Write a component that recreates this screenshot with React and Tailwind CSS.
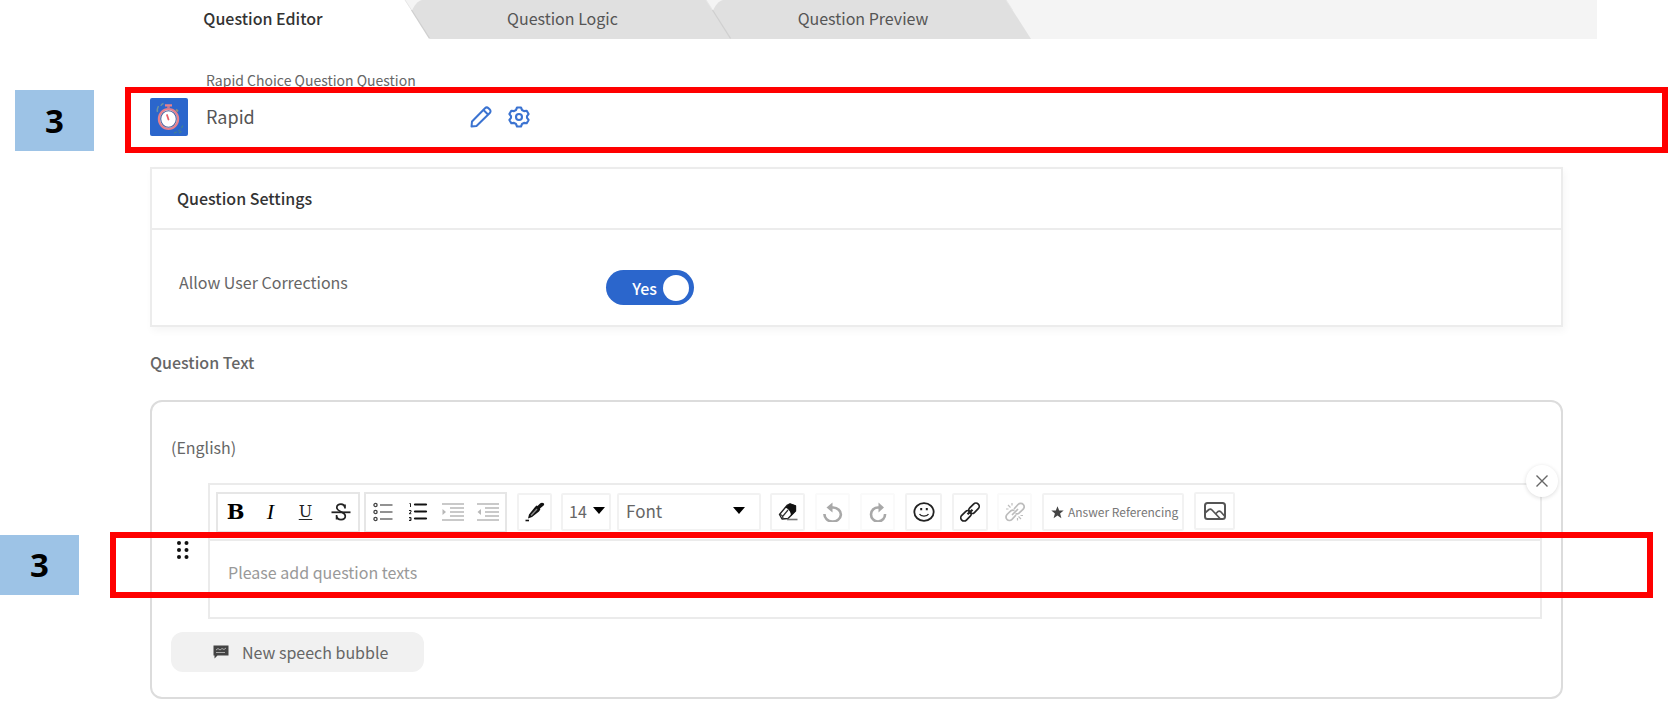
import React from "react";

function Slope({ left, right }) {
  return (
    <svg className="h-full w-[26px] shrink-0 bg-[#f4f4f4]" viewBox="0 0 26 39" preserveAspectRatio="none" aria-hidden="true">
      {right && <path d="M26 0H18C14 1 10 5 8 11L25 39H26Z" fill={right} />}
      <path d="M0 0H1L26 39H0Z" fill={left} />
      <path d="M1 0L7.500 10" stroke="#e6e6e6" strokeWidth="1" fill="none" />
      {right && <path d="M7.500 10L25.500 38.500" stroke="#cfcfcf" strokeWidth="1.300" fill="none" />}
    </svg>
  );
}

function Stopwatch() {
  return (
    <svg viewBox="0 0 38 38" className="h-[38px] w-[38px] shrink-0 rounded-[2px] bg-[#2b66cc]" aria-hidden="true">
      <ellipse cx="18.500" cy="21" rx="9.600" ry="10" fill="#fff" stroke="#e8808c" strokeWidth="2.200" />
      <ellipse cx="18.500" cy="21" rx="7.800" ry="8.200" fill="none" stroke="#4a5f9c" strokeWidth="1.100" />
      <path d="M15 7.300h7" stroke="#e8808c" strokeWidth="2.200" />
      <path d="M18.500 8v3" stroke="#c77b95" strokeWidth="2.600" />
      <path d="M17 17l1.500 4.500" stroke="#e8606c" strokeWidth="1.800" strokeLinecap="round" />
      <path d="M26 11.500l2 2" stroke="#8a8f83" strokeWidth="2" />
      <path d="M7.500 14c-1-2 0-4 1-6M11 8c0-1 1-2 2.500-2.500" stroke="#6d93a0" strokeWidth="1.400" fill="none" />
      <path d="M24 35c4-1 7-3 9-8M29 35l3-2" stroke="#3f7f98" strokeWidth="1.400" strokeDasharray="3 1.500" fill="none" />
    </svg>
  );
}

function Pencil() {
  return (
    <svg viewBox="0 0 22 22" className="h-[22px] w-[22px]" fill="none" stroke="#3b73d1" strokeWidth="2" strokeLinejoin="round" aria-hidden="true">
      <path d="M1.500 20.500L2 15.500L15 2.200C16 1.200 17.500 1.200 18.500 2.200L19.800 3.500C20.800 4.500 20.800 6 19.800 7L6.500 20Z" />
      <path d="M13.500 4L18 8.500" />
    </svg>
  );
}

function Gear() {
  return (
    <svg viewBox="0 0 22 22" className="h-[22px] w-[22px]" fill="none" stroke="#3b73d1" strokeWidth="2.100" strokeLinejoin="round" aria-hidden="true">
      <path d="M9 1.500H13L14 4L16 5.100L18.700 4.700L20.600 8.100L19 10.200V11.800L20.600 13.900L18.700 17.300L16 16.900L14 18L13 20.500H9L8 18L6 16.900L3.300 17.300L1.400 13.900L3 11.800V10.200L1.400 8.100L3.300 4.700L6 5.100L8 4Z" />
      <circle cx="11" cy="11" r="3" />
    </svg>
  );
}

function ToolButton({ label, className = "", children }) {
  return (
    <button type="button" aria-label={label} className={`flex h-[38px] shrink-0 items-center justify-center rounded-[2px] ${className}`}>
      {children}
    </button>
  );
}

function ListIcon({ numbered }) {
  return (
    <svg viewBox="0 0 20 20" className="h-5 w-5" aria-hidden="true">
      {[3, 10, 17].map((y, i) =>
        numbered ? (
          <g key={y}>
            <path d={i === 0 ? "M1.500 1.500h1v3.500" : i === 1 ? "M1 8.500h2v1.500l-2 1.700h2.300" : "M1 15.500h2v3h-2M1.500 17h1.500"} stroke="#222" fill="none" />
            <path d={`M7 ${y - 0.5}h11`} stroke="#111" strokeWidth="2.200" strokeLinecap="round" />
          </g>
        ) : (
          <g key={y}>
            <circle cx="2.500" cy={y} r="1.600" stroke="#444" strokeWidth="1.300" fill="none" />
            <path d={`M7 ${y}h12.500`} stroke="#777" strokeWidth="1.600" />
          </g>
        )
      )}
    </svg>
  );
}

function IndentIcon({ out }) {
  return (
    <svg viewBox="0 0 22 20" className="h-5 w-[22px]" stroke="#b8b8b8" strokeWidth="1.700" fill="none" aria-hidden="true">
      <path d="M0 2h22M8 6h14M8 10h14M8 14h14M0 18h22" />
      <path d={out ? "M4 7L0.500 10L4 13Z" : "M0.500 7L4 10L0.500 13Z"} fill="#b8b8b8" stroke="none" />
    </svg>
  );
}

function Toolbar() {
  const box = "border-2 border-[#f2f2f2]";
  const faint = "border-2 border-[#fafafa]";
  return (
    <div className="flex h-[54px] items-center overflow-hidden px-[6px]">
      <div className="flex h-[41px] w-[144px] shrink-0 items-center justify-around border-2 border-[#e6e6e6]">
        <ToolButton label="Bold" className="w-8">
          <span className="font-['DejaVu_Serif',serif] text-[21px] font-bold leading-6 text-black">B</span>
        </ToolButton>
        <ToolButton label="Italic" className="w-8">
          <span className="font-['Liberation_Serif',serif] text-[22px] italic leading-6 text-black">I</span>
        </ToolButton>
        <ToolButton label="Underline" className="w-8">
          <span className="font-['DejaVu_Serif',serif] text-[16px] leading-6 text-[#222] underline underline-offset-2">U</span>
        </ToolButton>
        <ToolButton label="Strikethrough" className="w-8">
          <svg viewBox="0 0 20 20" className="h-5 w-5" fill="none" stroke="#222" aria-hidden="true">
            <path d="M14 6.500V2.500M14 5.500C13.500 3 12 2.200 10 2.200C7.500 2.200 5.800 3.300 5.800 5.500C5.800 8 8 8.800 10 9.800C12.500 11 14.300 11.500 14.300 14C14.300 16.300 12.500 17.600 10 17.600C7.500 17.600 6 16.500 5.600 14M5.600 13V17.500" strokeWidth="1.700" />
            <path d="M0.500 10.300H19.500" strokeWidth="1.800" />
          </svg>
        </ToolButton>
      </div>
      <div className="ml-[4px] flex h-[41px] w-[143px] shrink-0 items-center justify-around border-2 border-[#e6e6e6]">
        <ToolButton label="Bulleted list" className="w-8"><ListIcon /></ToolButton>
        <ToolButton label="Numbered list" className="w-8"><ListIcon numbered /></ToolButton>
        <ToolButton label="Indent" className="w-8"><IndentIcon /></ToolButton>
        <ToolButton label="Outdent" className="w-8"><IndentIcon out /></ToolButton>
      </div>
      <ToolButton label="Text color" className={`ml-[10px] w-[35px] ${box}`}>
        <svg viewBox="0 0 20 20" className="h-5 w-5" aria-hidden="true">
          <path d="M18.700 1.200C17.500 0.200 15.800 0.600 14.800 1.700L12.500 4L11.500 3.500L10 5L4 12.500L3 16.500L7 15L14 9.500L15.300 7.500L15 6.500L18 4C19.200 3 19.600 2 18.700 1.200Z" fill="#111" />
          <path d="M6 13.500L12 7" stroke="#888" strokeWidth="1.400" />
          <path d="M0.500 18.500H4" stroke="#111" strokeWidth="1.600" />
        </svg>
      </ToolButton>
      <div className={`relative ml-[9px] h-[38px] w-[50px] shrink-0 rounded-[2px] ${box}`}>
        <select aria-label="Font size" defaultValue="14" className="h-full w-full appearance-none bg-transparent pb-[2px] pl-[6px] text-[16px] leading-5 text-[#666] outline-none">
          <option>14</option>
        </select>
        <svg viewBox="0 0 12 7" className="pointer-events-none absolute right-[4px] top-[12px] h-[7px] w-3" aria-hidden="true"><path d="M0 0H12L6 7Z" /></svg>
      </div>
      <div className={`relative ml-[6px] h-[38px] w-[144px] shrink-0 rounded-[2px] ${box}`}>
        <select aria-label="Font" defaultValue="Font" className="h-full w-full appearance-none bg-transparent pb-[2px] pl-[7px] text-[17px] leading-5 text-[#666] outline-none">
          <option>Font</option>
        </select>
        <svg viewBox="0 0 12 7" className="pointer-events-none absolute right-[14px] top-[12px] h-[7px] w-3" aria-hidden="true"><path d="M0 0H12L6 7Z" /></svg>
      </div>
      <ToolButton label="Clear formatting" className={`ml-[9px] w-[35px] ${box}`}>
        <svg viewBox="0 0 20 20" className="h-5 w-5" aria-hidden="true">
          <path d="M1.500 12.500L9 3.500L12 2L17.500 4V9L10 16.500L4 17Z" fill="#fff" stroke="#222" strokeWidth="1.400" strokeLinejoin="round" />
          <path d="M7 5.500L12 1.500L17.800 3.500V9L13 14C13 10 11 7 7 5.500Z" fill="#111" />
          <path d="M5 16.500C5 14 4.500 13 2 12.500M5 14L10 8" stroke="#333" strokeWidth="1.200" fill="none" />
          <path d="M9 17.500H19.500" stroke="#777" strokeWidth="1.600" />
        </svg>
      </ToolButton>
      <ToolButton label="Undo" className={`ml-[10px] w-[35px] ${faint}`}>
        <svg viewBox="0 0 20 20" className="h-5 w-5" aria-hidden="true">
          <path d="M1.500 12A8.200 7 0 1 0 10 5.500H7" fill="none" stroke="#a8a8a8" strokeWidth="2.600" />
          <path d="M9.500 0.500V10.500L3.500 5.500Z" fill="#a8a8a8" />
        </svg>
      </ToolButton>
      <ToolButton label="Redo" className={`ml-[10px] w-[35px] ${faint}`}>
        <svg viewBox="0 0 20 20" className="h-5 w-5" aria-hidden="true">
          <path d="M17 12A7 7 0 1 1 10.500 5.500H12" fill="none" stroke="#a8a8a8" strokeWidth="2.600" />
          <path d="M10.500 0.500V10.500L16 5.500Z" fill="#a8a8a8" />
        </svg>
      </ToolButton>
      <ToolButton label="Emoji" className={`ml-[10px] w-[37px] ${box}`}>
        <svg viewBox="0 0 22 20" className="h-5 w-[22px]" fill="none" stroke="#222" aria-hidden="true">
          <ellipse cx="11" cy="10" rx="9.700" ry="8.800" strokeWidth="1.800" />
          <path d="M6.500 12C8 14.800 14 14.800 15.500 12" strokeWidth="1.300" />
          <path d="M8.200 6V8.200M13.800 6V8.200" strokeWidth="2" />
        </svg>
      </ToolButton>
      <ToolButton label="Insert link" className={`ml-[10px] w-[36px] ${box}`}>
        <svg viewBox="0 0 20 20" className="h-5 w-5" fill="none" stroke="#222" strokeWidth="1.700" aria-hidden="true">
          <rect x="8" y="3" width="12" height="6.600" rx="3.300" transform="rotate(-45 14 6.300)" />
          <rect x="0" y="10.500" width="12" height="6.600" rx="3.300" transform="rotate(-45 6 13.800)" />
          <path d="M7.500 12.300L12.500 7.700" strokeWidth="2.200" />
        </svg>
      </ToolButton>
      <ToolButton label="Remove link" className={`ml-[9px] w-[35px] ${faint}`}>
        <svg viewBox="0 0 20 20" className="h-5 w-5" fill="none" stroke="#bdbdbd" strokeWidth="1.700" aria-hidden="true">
          <path d="M9 7L13 2.500C14.500 1 17 1 18.300 2.500C19.500 4 19.300 6 18 7.300L14 11.200C13 12 11.500 12 10.500 11.500" />
          <path d="M11 13L7 17.300C5.500 18.800 3.200 18.600 1.900 17.300C0.700 15.800 0.800 14 2 12.500L6 8.700C7 8 8.500 8 9.500 8.500M7 13L13 7" />
          <path d="M3 3L5.500 5.500M7 1V3.500M1 7H3.500M13.500 14.500L16 17M12.500 16V18.500M15.500 13.500H18" strokeWidth="1.200" />
        </svg>
      </ToolButton>
      <button type="button" className={`ml-[10px] flex h-[38px] w-[142px] shrink-0 items-center gap-[4px] whitespace-nowrap rounded-[2px] pl-[7px] text-[12px] leading-5 text-[#777] ${box}`}>
        <svg viewBox="0 0 20 20" className="h-[13px] w-[13px] shrink-0" aria-hidden="true">
          <path d="M10 0.500L12.600 7H19.500L14 11.500L16 19L10 14.800L4 19L6 11.500L0.500 7H7.400Z" fill="#444" />
        </svg>
        Answer Referencing
      </button>
      <ToolButton label="Insert image" className={`mb-[3px] ml-[10px] w-[41px] ${box}`}>
        <svg viewBox="0 0 22 18" className="h-[18px] w-[22px]" fill="none" stroke="#555" strokeWidth="2" strokeLinejoin="round" aria-hidden="true">
          <rect x="1" y="1" width="20" height="16" rx="2.500" />
          <path d="M1.500 10.500L5 7.500Q6.500 6.500 8 8L16 16.500M11.500 12L14 9.500Q15.500 8.500 17 10L20.500 14" strokeWidth="1.700" />
        </svg>
      </ToolButton>
    </div>
  );
}

export default function App() {
  return (
    <div className="relative min-h-screen overflow-hidden bg-white pb-2 font-['Noto_Sans_CJK_SC',sans-serif] text-[16px] leading-5 text-[#666]">
      <nav className="mr-[71px] flex h-[39px] bg-[#f4f4f4]" aria-label="Question sections">
        <button type="button" className="w-[404px] bg-white pb-[3px] pl-[122px] text-center font-medium text-[#333]">Question Editor</button>
        <Slope left="#ffffff" right="#e0e0e0" />
        <button type="button" className="w-[275px] bg-[#e0e0e0] pb-[3px] pr-[10px] text-center text-[#555]">Question Logic</button>
        <Slope left="#e0e0e0" right="#e0e0e0" />
        <button type="button" className="w-[274px] bg-[#e0e0e0] pb-[3px] pr-[10px] text-center text-[#555]">Question Preview</button>
        <Slope left="#e0e0e0" />
      </nav>

      <main className="ml-[150px] mr-[105px]">
        <header className="pt-[31px]">
          <p className="ml-14 text-[14px]">Rapid Choice Question Question</p>
          <div className="mt-2 flex h-[38px] items-center">
            <Stopwatch />
            <h1 className="ml-[18px] w-[264px] pb-[2px] text-[18px] leading-6 text-[#555]">Rapid</h1>
            <button type="button" aria-label="Rename question"><Pencil /></button>
            <button type="button" aria-label="Question options" className="ml-4"><Gear /></button>
          </div>
        </header>

        <section className="mt-[31px] border-2 border-[#ececec] shadow-[2px_4px_8px_rgba(0,0,0,0.04)]">
          <h2 className="flex h-[61px] items-center border-b-2 border-[#ececec] px-[25px] pb-[2px] font-medium text-[#333]">Question Settings</h2>
          <div className="flex h-[95px] items-center px-[27px] pb-4 pt-9">
            <label htmlFor="corrections" className="w-[427px] pb-3">Allow User Corrections</label>
            <label className="flex h-[35px] w-[88px] cursor-pointer items-center justify-end gap-[6px] rounded-full bg-[#2b66cc] pr-[5px] font-medium text-white">
              <input id="corrections" type="checkbox" defaultChecked className="sr-only" />
              Yes
              <span className="h-[26px] w-[26px] rounded-full bg-white" />
            </label>
          </div>
        </section>

        <h2 className="mt-[25px] font-medium">Question Text</h2>

        <section className="mt-7 rounded-[12px] border-2 border-[#dcdcdc] px-[19px] pb-[25px] pt-[35px]">
          <p>(English)</p>
          <div className="mt-[26px] flex">
            <button type="button" aria-label="Move bubble" className="mt-[56px] h-[22px] w-[37px] shrink-0 pl-[5px]">
              <svg viewBox="0 0 14 20" className="h-5 w-[14px]" aria-hidden="true">
                {[3, 10, 17].map((y) => (
                  <g key={y} fill="#111"><circle cx="3" cy={y} r="2" /><circle cx="10.500" cy={y} r="2" /></g>
                ))}
              </svg>
            </button>
            <div className="relative min-w-0 flex-1 border-2 border-[#ebebeb]">
              <Toolbar />
              <textarea aria-label="Question text" placeholder="Please add question texts" className="block h-[78px] w-full resize-none border-t-2 border-[#ebebeb] bg-transparent px-[18px] pt-[21px] outline-none placeholder:text-[#999]" />
              <button type="button" aria-label="Remove bubble" className="absolute -right-[18px] -top-5 flex h-8 w-8 items-center justify-center rounded-full bg-white shadow-[0_1px_4px_rgba(0,0,0,0.14)]">
                <svg viewBox="0 0 12 12" className="h-3 w-3" stroke="#666" strokeWidth="1.400" aria-hidden="true"><path d="M0.500 0.500L11.500 11.500M11.500 0.500L0.500 11.500" /></svg>
              </button>
            </div>
          </div>
          <button type="button" className="mt-[13px] flex h-10 w-[253px] items-center rounded-[12px] bg-[#f1f1f1] pl-[42px]">
            <svg viewBox="0 0 16 14" className="h-[14px] w-4" aria-hidden="true">
              <path d="M0.500 0.500H15.500V10.500H4.500L1.500 13.500V10.500H0.500Z" fill="#444" />
              <path d="M3 5L5 3.500L7 5L9 3.500L11 4.500L13 3M3 7.500H12" stroke="#aaa" fill="none" />
            </svg>
            <span className="ml-[13px]">New speech bubble</span>
          </button>
        </section>
      </main>

      <div className="pointer-events-none absolute left-[125px] right-0 top-[87px] h-[66px] border-[6px] border-[#ff0000]" />
      <div className="absolute left-[15px] top-[90px] flex h-[61px] w-[79px] items-center justify-center bg-[#9dc3e6] font-['Open_Sans',sans-serif] text-[33px] font-bold leading-10 text-black">3</div>
      <div className="pointer-events-none absolute left-[110px] right-[15px] top-[532px] h-[66px] border-[6px] border-[#ff0000]" />
      <div className="absolute left-0 top-[535px] flex h-[60px] w-[79px] items-center justify-center bg-[#9dc3e6] font-['Open_Sans',sans-serif] text-[33px] font-bold leading-10 text-black">3</div>
    </div>
  );
}
